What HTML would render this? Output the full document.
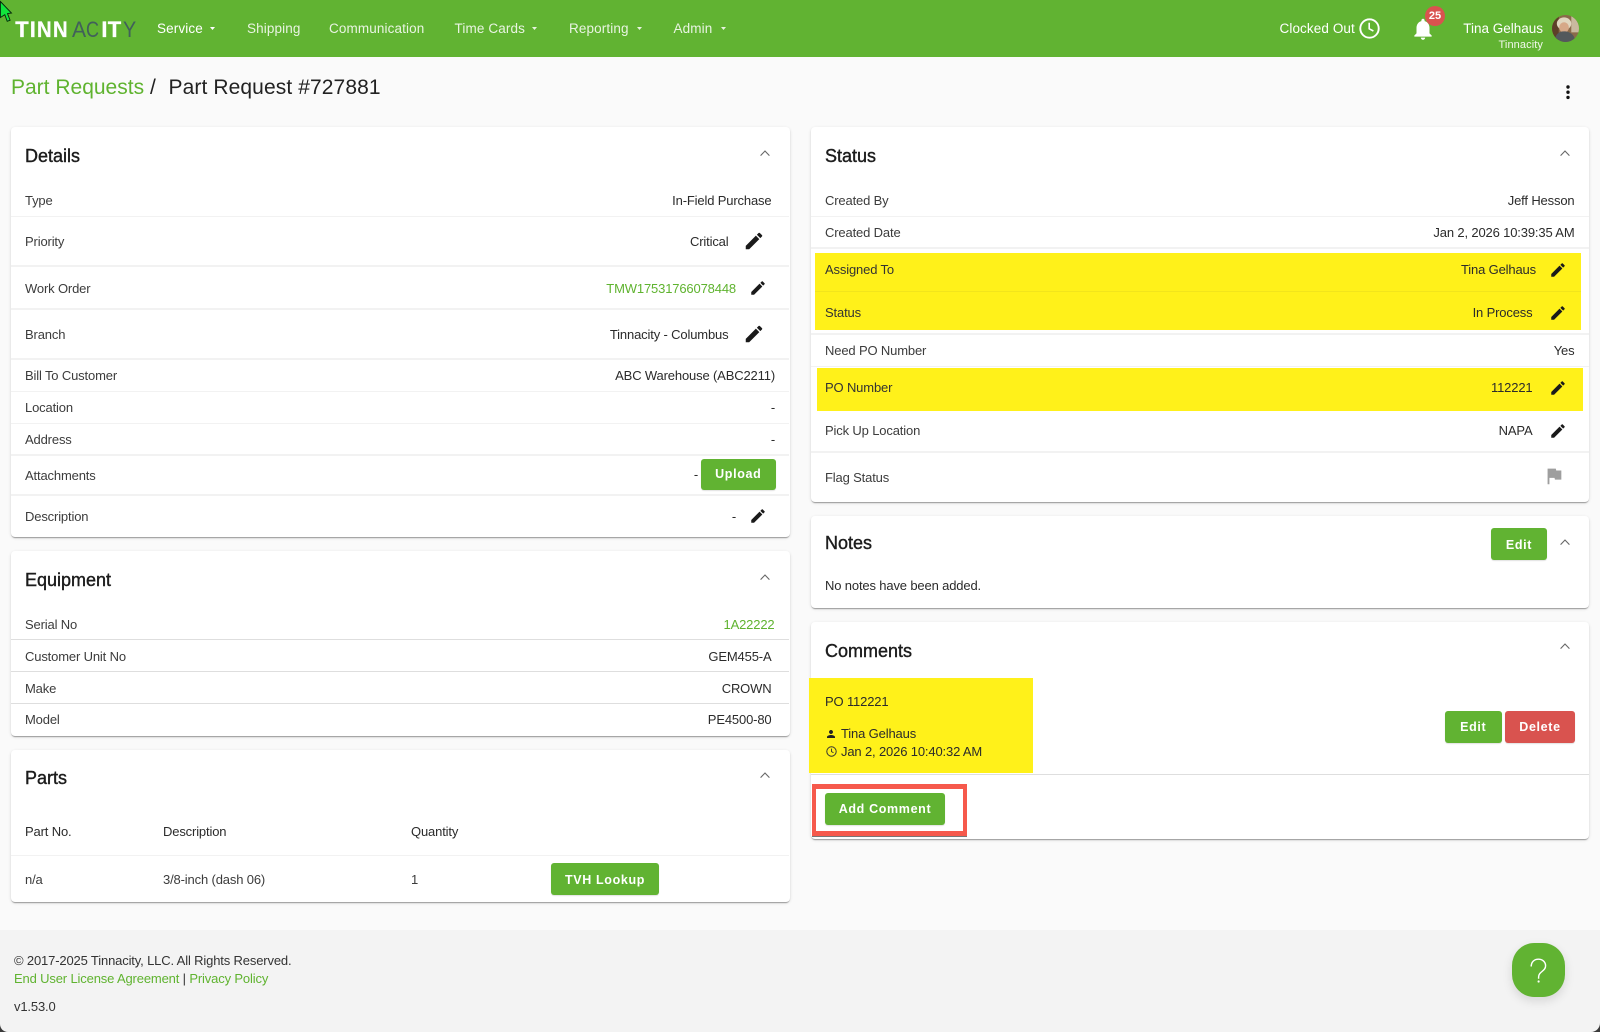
<!DOCTYPE html>
<html lang="en"><head><meta charset="utf-8"><title>Part Request #727881</title>
<style>
*{box-sizing:border-box}
html,body{margin:0;padding:0}
body{width:1600px;height:1032px;position:relative;overflow:hidden;background:#fafafa;font-family:"Liberation Sans",Arial,sans-serif;color:#333;font-size:13px;letter-spacing:-.15px}
a{color:#5fb32f;text-decoration:none}
.nav{position:absolute;left:0;top:0;width:1600px;height:56.5px;background:#61b332}
.t,.r,.c{position:absolute;height:20px;line-height:20px;white-space:nowrap;margin-top:.5px}
.n{color:rgba(255,255,255,.86);font-size:13.5px;top:18.5px;letter-spacing:.12px}
.card{position:absolute;background:#fff;border-radius:4px;box-shadow:0 2px 1px -1px rgba(0,0,0,.22),0 1px 1px 0 rgba(0,0,0,.14),0 1px 3px 0 rgba(0,0,0,.12)}
.sep{position:absolute;height:1.5px;background:#f2f2f2}
.sd{height:1px;background:#dedede}
.h{font-size:18px;letter-spacing:0;color:#1c1c1c;-webkit-text-stroke:.4px #1c1c1c}
.bt{position:absolute;background:#61b332;color:#fff;border-radius:3px;font-weight:bold;font-size:12.5px;letter-spacing:.65px;text-align:center;padding-top:.5px;box-shadow:0 1px 1px rgba(0,0,0,.12)}
.y{position:absolute;background:#fff11a}
.g{color:#5fb32f}
svg{position:absolute;overflow:visible}
.logo span{position:absolute;top:18px;line-height:24px;height:24px;font-size:22px;letter-spacing:0;transform-origin:0 50%}
.w{color:#fff;font-weight:bold;-webkit-text-stroke:.3px #fff}
.d{color:#41605a;font-weight:normal}
.lab{color:#3c3c3c}
.val{color:#2b2b2b}
</style></head><body>
<svg width="0" height="0" style="position:absolute"><defs>
<symbol id="pen" viewBox="0 0 24 24"><path fill="#1a1a1a" d="M3 17.25V21h3.75L17.81 9.94l-3.75-3.75L3 17.25zM20.71 7.04c.39-.39.39-1.02 0-1.41l-2.34-2.34c-.39-.39-1.02-.39-1.41 0l-1.83 1.83 3.75 3.75 1.83-1.83z"/></symbol>
<symbol id="chev" viewBox="0 0 10 6"><path fill="none" stroke="#666" stroke-width="1.1" d="M.6 5.6 5 1l4.4 4.6"/></symbol>
</defs></svg>

<div class="nav"></div>
<div class="logo">
<span class="w" style="left:15.3px">T</span>
<span class="w" style="left:29.8px">I</span>
<span class="w" style="left:36.6px;transform:scaleX(.92)">N</span>
<span class="w" style="left:52.6px;transform:scaleX(.92)">N</span>
<span class="d" style="left:72px;transform:scaleX(.96)">A</span>
<span class="d" style="left:86.4px;transform:scaleX(.82)">C</span>
<span class="w" style="left:101.4px">I</span>
<span class="w" style="left:107.8px">T</span>
<span class="d" style="left:123px;transform:scaleX(.9)">Y</span>
</div>
<div class="t n" style="left:157px;color:#fff">Service</div>
<div class="t n" style="left:247px">Shipping</div>
<div class="t n" style="left:329px">Communication</div>
<div class="t n" style="left:454.5px">Time Cards</div>
<div class="t n" style="left:569px">Reporting</div>
<div class="t n" style="left:673.5px">Admin</div>
<svg style="left:209.5px;top:27px" width="5" height="3"><path fill="#fff" d="M0 0h5L2.5 3z"/></svg>
<svg style="left:531.5px;top:27px" width="5" height="3"><path fill="#e8f3e0" d="M0 0h5L2.5 3z"/></svg>
<svg style="left:636.5px;top:27px" width="5" height="3"><path fill="#e8f3e0" d="M0 0h5L2.5 3z"/></svg>
<svg style="left:720.5px;top:27px" width="5" height="3"><path fill="#e8f3e0" d="M0 0h5L2.5 3z"/></svg>
<svg style="left:0;top:0" width="14" height="24"><path fill="#12e63c" stroke="#06260c" stroke-width=".9" d="M.4 1.5 11.5 13l-4 .6 2.6 6.6-2.9 1.1-2.4-6.6L.4 17.5z"/></svg>

<div class="t" style="left:1279.5px;top:18.5px;color:#fff;font-size:13.5px;letter-spacing:.1px">Clocked Out</div>
<svg style="left:1359px;top:17.5px" width="21" height="21" viewBox="0 0 21 21"><circle cx="10.5" cy="10.5" r="9.2" fill="none" stroke="#fff" stroke-width="1.9"/><path fill="none" stroke="#fff" stroke-width="1.6" d="M10.2 4.8v6l4.2 2.2"/></svg>
<svg style="left:1410px;top:15.5px" width="26" height="26" viewBox="0 0 24 24"><path fill="#fff" d="M12 22c1.1 0 2-.9 2-2h-4c0 1.1.89 2 2 2zm6-6v-5c0-3.07-1.64-5.64-4.5-6.32V4c0-.83-.67-1.5-1.5-1.5s-1.5.67-1.5 1.5v.68C7.63 5.36 6 7.92 6 11v5l-2 2v1h16v-1l-2-2z"/></svg>
<div style="position:absolute;left:1425px;top:6px;width:20px;height:20px;border-radius:50%;background:#d9534f;color:#fff;font-size:11px;font-weight:bold;letter-spacing:0;line-height:20px;text-align:center">25</div>
<div class="r" style="right:57px;top:18.5px;color:#fff;font-size:13.5px;letter-spacing:0">Tina Gelhaus</div>
<div class="r" style="right:57px;top:34.5px;color:#f1f8ec;font-size:11px;letter-spacing:.1px">Tinnacity</div>
<svg style="left:1551.5px;top:14.5px" width="27" height="27" viewBox="0 0 28 28"><defs><clipPath id="av"><circle cx="14" cy="14" r="14"/></clipPath></defs><g clip-path="url(#av)"><rect width="28" height="28" fill="#8a6a4a"/><rect x="0" width="7" height="28" fill="#5d3f28"/><rect x="20" width="8" height="18" fill="#c9b99f"/><ellipse cx="12.5" cy="9" rx="7.5" ry="6.5" fill="#e0d6bf"/><ellipse cx="12.5" cy="13" rx="5" ry="5.5" fill="#d6a888"/><path fill="#53585c" d="M3 28c0-7 3-11 9.5-11S24 21 24 28z"/></g></svg>

<div class="t g" style="left:11px;top:75px;height:24px;line-height:24px;font-size:21px;letter-spacing:0;color:#5fb32f">Part Requests</div>
<div class="t" style="left:150px;top:75px;height:24px;line-height:24px;font-size:21px;letter-spacing:0;color:#222">/</div>
<div class="t" style="left:168.5px;top:75px;height:24px;line-height:24px;font-size:21px;letter-spacing:.1px;color:#222">Part Request #727881</div>
<svg style="left:1566px;top:85px" width="4" height="14"><circle cx="2" cy="2" r="1.7" fill="#111"/><circle cx="2" cy="7.2" r="1.7" fill="#111"/><circle cx="2" cy="12.4" r="1.7" fill="#111"/></svg>

<!-- Details -->
<div class="card" style="left:11px;top:127px;width:778.5px;height:410px"></div>
<div class="t h" style="left:25px;top:145px">Details</div>
<svg style="left:759.5px;top:150px" width="10" height="6"><use href="#chev"/></svg>
<div class="sep" style="left:11px;width:778px;top:215.5px"></div>
<div class="sep" style="left:11px;width:778px;top:265px"></div>
<div class="sep" style="left:11px;width:778px;top:308px"></div>
<div class="sep" style="left:11px;width:778px;top:358px"></div>
<div class="sep" style="left:11px;width:778px;top:390.5px"></div>
<div class="sep" style="left:11px;width:778px;top:422.5px"></div>
<div class="sep" style="left:11px;width:778px;top:454px"></div>
<div class="sep" style="left:11px;width:778px;top:494px"></div>
<div class="t lab" style="left:25px;top:190px">Type</div><div class="r val" style="right:828.5px;top:190px">In-Field Purchase</div>
<div class="t lab" style="left:25px;top:231px">Priority</div><div class="r val" style="right:871.5px;top:231px">Critical</div>
<svg style="left:742.5px;top:230px" width="22" height="22"><use href="#pen"/></svg>
<div class="t lab" style="left:25px;top:278px">Work Order</div><div class="r g" style="right:864px;top:278px">TMW17531766078448</div>
<svg style="left:748.5px;top:279px" width="18" height="18"><use href="#pen"/></svg>
<div class="t lab" style="left:25px;top:324px">Branch</div><div class="r val" style="right:871.5px;top:324px">Tinnacity - Columbus</div>
<svg style="left:742.5px;top:323px" width="22" height="22"><use href="#pen"/></svg>
<div class="t lab" style="left:25px;top:365px">Bill To Customer</div><div class="r val" style="right:825px;top:365px">ABC Warehouse (ABC2211)</div>
<div class="t lab" style="left:25px;top:397px">Location</div><div class="r val" style="right:825px;top:397px">-</div>
<div class="t lab" style="left:25px;top:429px">Address</div><div class="r val" style="right:825px;top:429px">-</div>
<div class="t lab" style="left:25px;top:465px">Attachments</div><div class="r val" style="right:902px;top:464px">-</div>
<div class="bt" style="left:701px;top:458.5px;width:74.5px;height:31.5px;line-height:31.5px">Upload</div>
<div class="t lab" style="left:25px;top:506px">Description</div><div class="r val" style="right:864px;top:506px">-</div>
<svg style="left:748.5px;top:507px" width="18" height="18"><use href="#pen"/></svg>

<!-- Equipment -->
<div class="card" style="left:11px;top:551px;width:778.5px;height:185px"></div>
<div class="t h" style="left:25px;top:569px">Equipment</div>
<svg style="left:759.5px;top:573.5px" width="10" height="6"><use href="#chev"/></svg>
<div class="sep sd" style="left:11px;width:778px;top:639px"></div>
<div class="sep sd" style="left:11px;width:778px;top:671px"></div>
<div class="sep sd" style="left:11px;width:778px;top:703px"></div>
<div class="t lab" style="left:25px;top:614px">Serial No</div><div class="r g" style="right:825.5px;top:614px">1A22222</div>
<div class="t lab" style="left:25px;top:646px">Customer Unit No</div><div class="r val" style="right:828.5px;top:646px">GEM455-A</div>
<div class="t lab" style="left:25px;top:678px">Make</div><div class="r val" style="right:828.5px;top:678px">CROWN</div>
<div class="t lab" style="left:25px;top:709.5px">Model</div><div class="r val" style="right:828.5px;top:709.5px">PE4500-80</div>

<!-- Parts -->
<div class="card" style="left:11px;top:750px;width:778.5px;height:152px"></div>
<div class="t h" style="left:25px;top:767px">Parts</div>
<svg style="left:759.5px;top:771.5px" width="10" height="6"><use href="#chev"/></svg>
<div class="t val" style="left:25px;top:821px">Part No.</div>
<div class="t val" style="left:163px;top:821px">Description</div>
<div class="t val" style="left:411px;top:821px">Quantity</div>
<div class="sep" style="left:11px;width:778px;top:855px;height:1px"></div>
<div class="t lab" style="left:25px;top:869px">n/a</div>
<div class="t lab" style="left:163px;top:869px">3/8-inch (dash 06)</div>
<div class="t lab" style="left:411px;top:869px">1</div>
<div class="bt" style="left:551px;top:863px;width:108px;height:32px;line-height:32px">TVH Lookup</div>

<!-- Status -->
<div class="card" style="left:811px;top:127px;width:778px;height:375px"></div>
<div class="t h" style="left:825px;top:145px">Status</div>
<svg style="left:1559.5px;top:150px" width="10" height="6"><use href="#chev"/></svg>
<div class="sep" style="left:811px;width:778px;top:215.5px"></div>
<div class="sep" style="left:811px;width:778px;top:247px"></div>
<div class="y" style="left:814.5px;top:253px;width:766.5px;height:77px"></div>
<div class="sep" style="left:815px;width:766px;top:290.5px;background:#f2e51c"></div>
<div class="sep" style="left:811px;width:778px;top:333px"></div>
<div class="sep" style="left:811px;width:778px;top:365.5px"></div>
<div class="y" style="left:816.5px;top:367.5px;width:766.5px;height:43px"></div>
<div class="sep" style="left:811px;width:778px;top:451px"></div>
<div class="t lab" style="left:825px;top:190px">Created By</div><div class="r val" style="right:25.5px;top:190px">Jeff Hesson</div>
<div class="t lab" style="left:825px;top:222px">Created Date</div><div class="r val" style="right:25.5px;top:222px">Jan 2, 2026 10:39:35 AM</div>
<div class="t" style="left:825px;top:259.5px;color:#333">Assigned To</div><div class="r val" style="right:64px;top:259.5px">Tina Gelhaus</div>
<svg style="left:1548.5px;top:260.5px" width="18" height="18"><use href="#pen"/></svg>
<div class="t" style="left:825px;top:302.5px;color:#333">Status</div><div class="r val" style="right:67.5px;top:302.5px">In Process</div>
<svg style="left:1548.5px;top:303.5px" width="18" height="18"><use href="#pen"/></svg>
<div class="t lab" style="left:825px;top:340px">Need PO Number</div><div class="r val" style="right:25.5px;top:340px">Yes</div>
<div class="t" style="left:825px;top:377.5px;color:#333">PO Number</div><div class="r val" style="right:67.5px;top:377.5px">112221</div>
<svg style="left:1548.5px;top:378.5px" width="18" height="18"><use href="#pen"/></svg>
<div class="t lab" style="left:825px;top:420.5px">Pick Up Location</div><div class="r val" style="right:67.5px;top:420.5px">NAPA</div>
<svg style="left:1548.5px;top:421.5px" width="18" height="18"><use href="#pen"/></svg>
<div class="t lab" style="left:825px;top:467px">Flag Status</div>
<svg style="left:1543px;top:465px" width="22" height="22" viewBox="0 0 24 24"><path fill="#9e9e9e" d="M14.4 6 14 4H5v17h2v-7h5.6l.4 2h7V6z"/></svg>

<!-- Notes -->
<div class="card" style="left:811px;top:516px;width:778px;height:92px"></div>
<div class="t h" style="left:825px;top:532px">Notes</div>
<svg style="left:1559.5px;top:538.5px" width="10" height="6"><use href="#chev"/></svg>
<div class="bt" style="left:1491px;top:528px;width:56px;height:32px;line-height:32px">Edit</div>
<div class="t val" style="left:825px;top:575px">No notes have been added.</div>

<!-- Comments -->
<div class="card" style="left:811px;top:622px;width:778px;height:217px"></div>
<div class="t h" style="left:825px;top:640px">Comments</div>
<svg style="left:1559.5px;top:643px" width="10" height="6"><use href="#chev"/></svg>
<div class="y" style="left:809px;top:677.5px;width:224px;height:95px"></div>
<div class="t val" style="left:825px;top:691px">PO 112221</div>
<svg style="left:825px;top:727.5px" width="12" height="12" viewBox="0 0 24 24"><path fill="#222" d="M12 12c2.21 0 4-1.79 4-4s-1.79-4-4-4-4 1.79-4 4 1.79 4 4 4zm0 2c-2.67 0-8 1.34-8 4v2h16v-2c0-2.66-5.33-4-8-4z"/></svg>
<div class="t val" style="left:841px;top:723.5px">Tina Gelhaus</div>
<svg style="left:825.5px;top:745.5px" width="11" height="11" viewBox="0 0 11 11"><circle cx="5.5" cy="5.5" r="4.7" fill="none" stroke="#333" stroke-width="1"/><path fill="none" stroke="#333" stroke-width=".9" d="M5.5 2.6v3l2 1.2"/></svg>
<div class="t val" style="left:841px;top:741px">Jan 2, 2026 10:40:32 AM</div>
<div class="bt" style="left:1445px;top:711px;width:56.5px;height:31.5px;line-height:31.5px">Edit</div>
<div class="bt" style="left:1505px;top:711px;width:70px;height:31.5px;line-height:31.5px;background:#d9534f">Delete</div>
<div class="sep sd" style="left:811px;width:778px;top:774px"></div>
<div style="position:absolute;left:812px;top:783.5px;width:154.5px;height:52px;border:solid #f6594c;border-width:5px 4px;box-shadow:0 1px 0 #777"></div>
<div class="bt" style="left:825px;top:793px;width:120px;height:31.5px;line-height:31.5px">Add Comment</div>

<!-- Footer -->
<div style="position:absolute;left:0;top:930px;width:1600px;height:102px;background:#f3f3f3"></div>
<div class="t" style="left:14px;top:950.5px;color:#333">© 2017-2025 Tinnacity, LLC. All Rights Reserved.</div>
<div class="t" style="left:14px;top:968px;color:#333"><a href="#">End User License Agreement</a> | <a href="#">Privacy Policy</a></div>
<div class="t" style="left:14px;top:996.5px;color:#333">v1.53.0</div>
<div style="position:absolute;left:1512px;top:943px;width:53px;height:54px;background:#61b332;border-radius:42%;box-shadow:0 4px 10px rgba(0,0,0,.12)"></div>
<svg style="left:1512px;top:943px" width="53" height="54" viewBox="0 0 53 54"><path fill="none" stroke="#fff" stroke-width="1.4" d="M19.2 23.5c0-4.6 3.1-7.3 7.2-7.3s7.2 2.7 7.2 6.7c0 5.4-7 5.6-7 11.2v1.7"/><circle cx="26.6" cy="38.5" r="1.1" fill="#fff"/></svg>
<svg style="left:0;top:1024px" width="8" height="8"><path fill="#3a3a3a" d="M0 0v8h8C3.5 8 0 4.5 0 0z"/></svg>
<svg style="left:1591px;top:1023px" width="9" height="9"><path fill="#3a3a3a" d="M9 0v9H0c5 0 9-4 9-9z"/></svg>
</body></html>
